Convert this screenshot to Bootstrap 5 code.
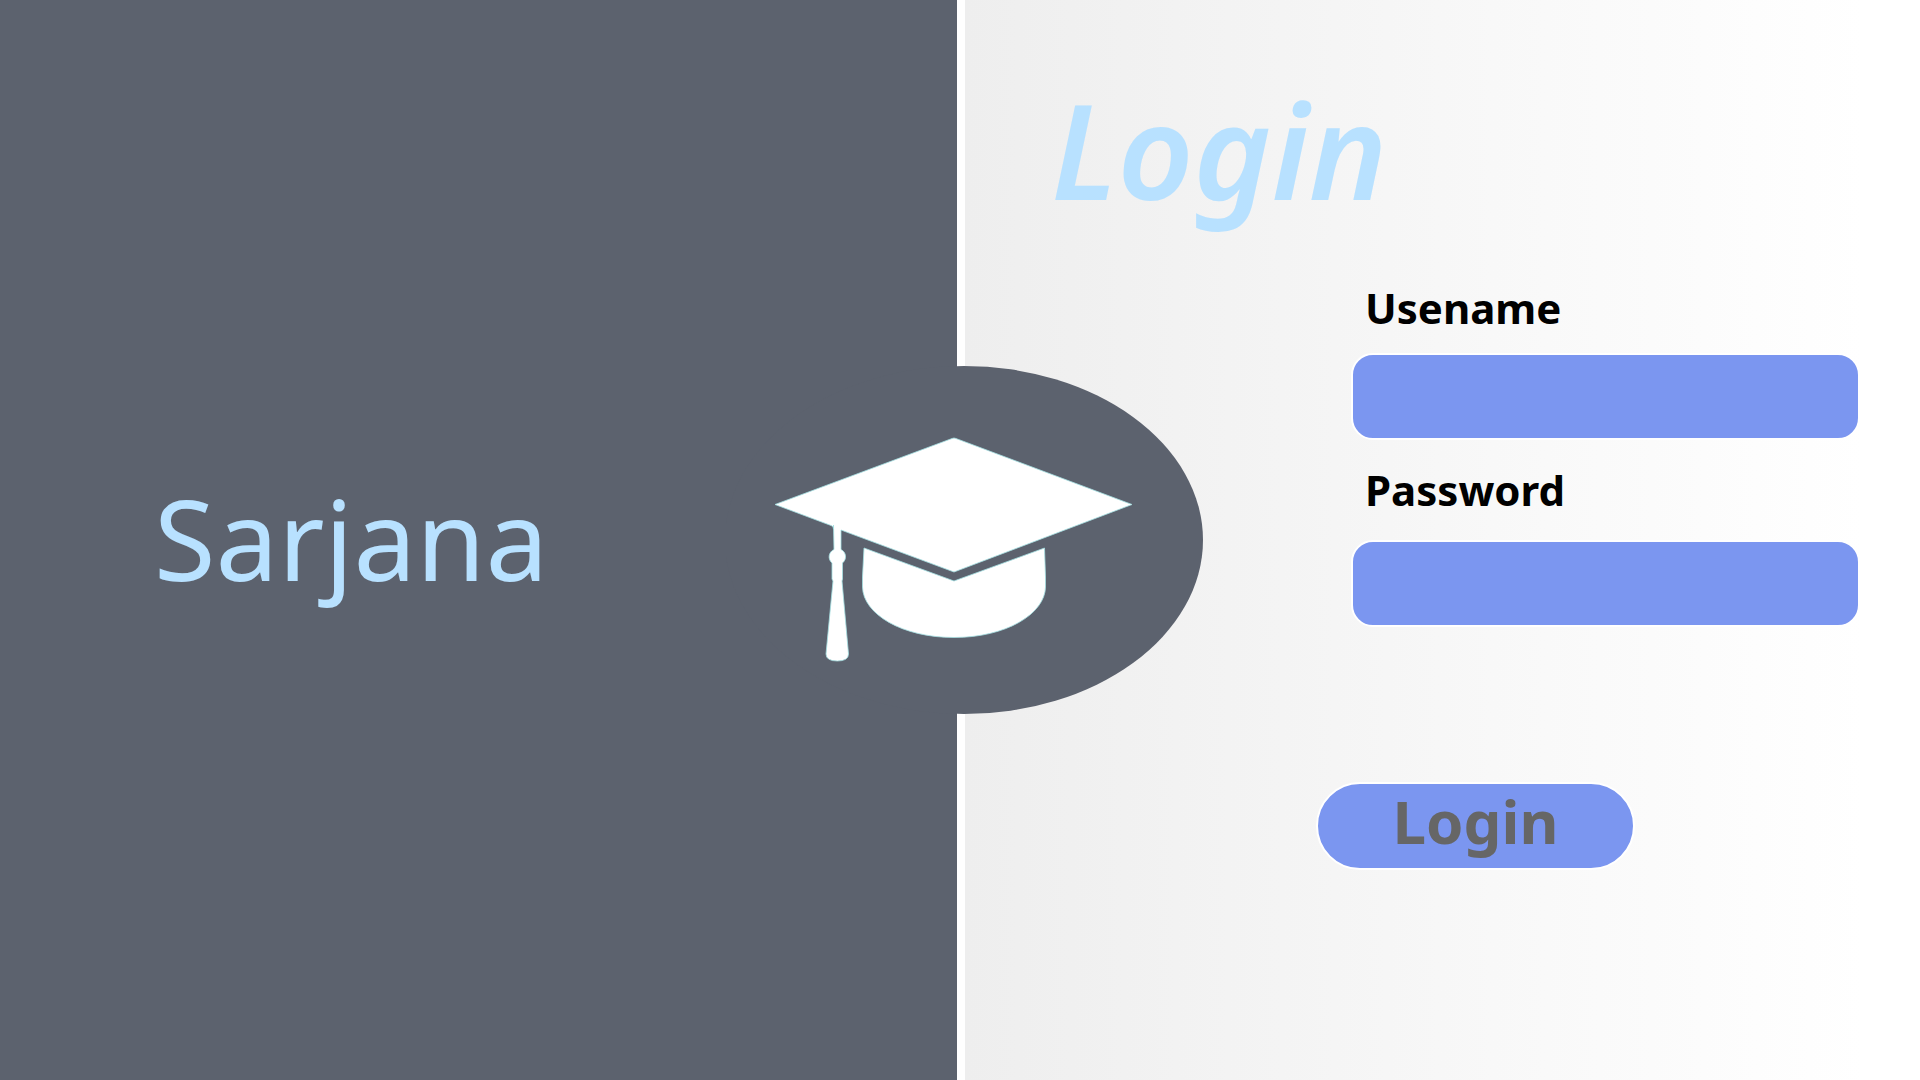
<!DOCTYPE html>
<html lang="en">
<head>
<meta charset="utf-8">
<meta name="viewport" content="width=device-width, initial-scale=1">
<title>Sarjana Login</title>
<link rel="stylesheet" href="https://cdn.jsdelivr.net/npm/bootstrap@5.3.0/dist/css/bootstrap.min.css">
<style>
  body { font-family: "Noto Sans", "Open Sans", sans-serif; }
  .brand-pane { width: calc(50% - 3px); background: #5c626e; padding: 0 0 4px 154px; }
  .brand-name { font-size: 112px; line-height: 160px; color: #b8e1ff; }
  .login-pane { border-left: 8px solid #fff; background: linear-gradient(90deg, #eeeeee, #ffffff 94%); padding: 69px 60px 0 86px; }
  .login-title { font-size: 132px; line-height: 160px; font-weight: 600; color: #b8e1ff; }
  .login-form { padding-left: 265px; padding-top: 49px; }
  .field-group { margin: 0 0 20px 35px; }
  .field-label { font-size: 42px; line-height: 60px; font-weight: 700; color: #000; padding-left: 14px; margin-bottom: 15px; }
  .field-group + .field-group .field-label { margin-bottom: 20px; }
  .field-input, .field-input:focus { height: 87px; border: 2px solid #fff; border-radius: 22px; background: #7b96f0; font-size: 36px; padding: 0 24px; }
  .login-btn, .login-btn:hover { width: 319px; height: 88px; margin-top: 135px; border: 2px solid #fff; border-radius: 44px; background: #7b96f0; color: #666; font-size: 60px; line-height: 68px; font-weight: 700; padding: 0 0 10px; }
  .emblem { left: calc(50% + 5px); width: 478px; }
</style>
<script src="https://cdn.jsdelivr.net/npm/bootstrap@5.3.0/dist/js/bootstrap.bundle.min.js" defer></script>
</head>
<body>
<main class="d-flex min-vh-100 position-relative">
  <section class="brand-pane d-flex align-items-center flex-shrink-0">
    <div class="brand-name">Sarjana</div>
  </section>
  <section class="login-pane flex-grow-1">
    <h1 class="login-title fst-italic m-0">Login</h1>
    <form class="login-form">
      <div class="field-group">
        <label class="field-label d-block" for="username">Usename</label>
        <input class="field-input form-control" type="text" id="username" autocomplete="username">
      </div>
      <div class="field-group">
        <label class="field-label d-block" for="password">Password</label>
        <input class="field-input form-control" type="password" id="password" autocomplete="current-password">
      </div>
      <button class="login-btn btn" type="submit">Login</button>
    </form>
  </section>
  <svg class="emblem position-absolute top-50 translate-middle" viewBox="726 366 478 348" role="img" aria-label="Graduation cap">
    <ellipse cx="964" cy="540" rx="239" ry="174" fill="#5c626e"/>
    <g fill="#fff" stroke="#a5e0e2" stroke-width="0.8">
      <path d="M864 548L954 581L1044.500 548L1045.500 577V587C1045 614 1006 637.500 954 637.500S863 614 862.500 587V577Z"/>
      <path d="M833.500 525L834 549.500A8 8 0 0 0 832 563V579L833 581L826 654Q826 661 837.300 661T848.500 654L842 581L842.500 579V563A8 8 0 0 0 841 549.500V530L954 572L1132 504.500L956 438.500Q954 437.500 952 438.500L775 504.500L831 525.500Q833.500 526 833.500 529Z"/>
    </g>
  </svg>
</main>
</body>
</html>
